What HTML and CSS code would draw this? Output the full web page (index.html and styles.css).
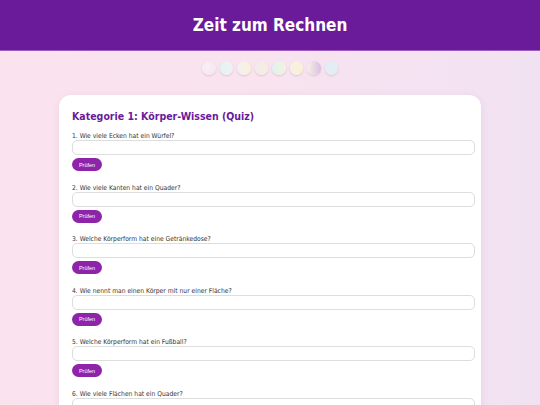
FILE: index.html
```html
<!DOCTYPE html>
<html lang="de">
<head>
<meta charset="utf-8">
<title>Zeit zum Rechnen</title>
<link rel="stylesheet" href="styles.css">
</head>
<body>
<header class="top">
  <h1 class="title">Zeit zum Rechnen</h1>
</header>
<div class="dots">
  <span class="dot d1"></span><span class="dot d2"></span><span class="dot d3"></span><span class="dot d4"></span><span class="dot d5"></span><span class="dot d6"></span><span class="dot d7"></span><span class="dot d8"></span>
</div>
<main class="card">
  <h2 class="cat">Kategorie 1: Körper-Wissen (Quiz)</h2>
  <div class="q">
    <label class="ql">1. Wie viele Ecken hat ein Würfel?</label>
    <input class="qi" type="text">
    <button class="btn">Prüfen</button>
  </div>
  <div class="q">
    <label class="ql">2. Wie viele Kanten hat ein Quader?</label>
    <input class="qi" type="text">
    <button class="btn">Prüfen</button>
  </div>
  <div class="q">
    <label class="ql">3. Welche Körperform hat eine Getränkedose?</label>
    <input class="qi" type="text">
    <button class="btn">Prüfen</button>
  </div>
  <div class="q">
    <label class="ql">4. Wie nennt man einen Körper mit nur einer Fläche?</label>
    <input class="qi" type="text">
    <button class="btn">Prüfen</button>
  </div>
  <div class="q">
    <label class="ql">5. Welche Körperform hat ein Fußball?</label>
    <input class="qi" type="text">
    <button class="btn">Prüfen</button>
  </div>
  <div class="q">
    <label class="ql">6. Wie viele Flächen hat ein Quader?</label>
    <input class="qi" type="text">
    <button class="btn">Prüfen</button>
  </div>
</main>
</body>
</html>
```
FILE: styles.css
```css
html, body {
  margin: 0;
  padding: 0;
}
body {
  font-family: "Comic Sans MS", "DejaVu Sans Condensed", "DejaVu Sans", sans-serif;
  font-stretch: condensed;
  background: linear-gradient(90deg, #fbe3ee 0%, #f8e3ef 50%, #f1e2f3 100%);
  height: 405px;
  overflow: hidden;
}
.top {
  background: #6a1b9a;
  height: 50px;
  border-bottom: 1px solid #9c5cc0;
  display: flex;
  align-items: center;
  justify-content: center;
}
.title {
  margin: 0;
  color: #fff;
  font-size: 17px;
  font-weight: bold;
}
.dots {
  display: flex;
  justify-content: center;
  gap: 4px;
  padding: 10px 0 0;
  height: 44px;
  box-sizing: border-box;
}
.dot {
  width: 13.5px;
  height: 13.5px;
  border-radius: 50%;
  box-shadow: 0 1px 2px rgba(150, 100, 140, 0.25);
}
.d1 { background: radial-gradient(circle at 40% 40%, #fbeef6, #f3e3ef); }
.d2 { background: linear-gradient(90deg, #e2f3f3, #f0f0f6); }
.d3 { background: linear-gradient(90deg, #f4eef4, #f7f1d8); }
.d4 { background: linear-gradient(90deg, #f3e9ee, #f3f0dc); }
.d5 { background: linear-gradient(90deg, #dff1ee, #f4f2de); }
.d6 { background: linear-gradient(90deg, #f7efe4, #faf0d8); }
.d7 { background: linear-gradient(90deg, #f7f0e4, #d9bfe6); }
.d8 { background: linear-gradient(90deg, #e7eaf3, #deeff2); }
.card {
  display: block;
  width: 422px;
  margin: 0 auto;
  background: #fff;
  border-radius: 12px;
  box-shadow: 0 2px 8px rgba(160, 100, 150, 0.12);
  padding: 13px 6px 20px 13px;
  box-sizing: border-box;
  min-height: 330px;
}
.cat {
  margin: 0 0 8px;
  color: #6a1b9a;
  font-size: 10.5px;
  font-weight: bold;
  line-height: 16px;
}
.q {
  display: flex;
  flex-direction: column;
  align-items: flex-start;
  margin-bottom: 12.6px;
}
.ql {
  font-size: 6.7px;
  color: #333;
  line-height: 8px;
}
.qi {
  width: 100%;
  height: 15px;
  box-sizing: border-box;
  border: 1px solid #ddd;
  border-radius: 5px;
  margin: 0 0 3px;
  padding: 0 4px;
  background: #fff;
}
.btn {
  font-family: "Liberation Sans", Arial, sans-serif;
  font-stretch: normal;
  font-size: 5.5px;
  color: #fff;
  background: #8e24aa;
  border: none;
  border-radius: 7px;
  width: 30px;
  height: 13px;
  padding: 0;
}
```
